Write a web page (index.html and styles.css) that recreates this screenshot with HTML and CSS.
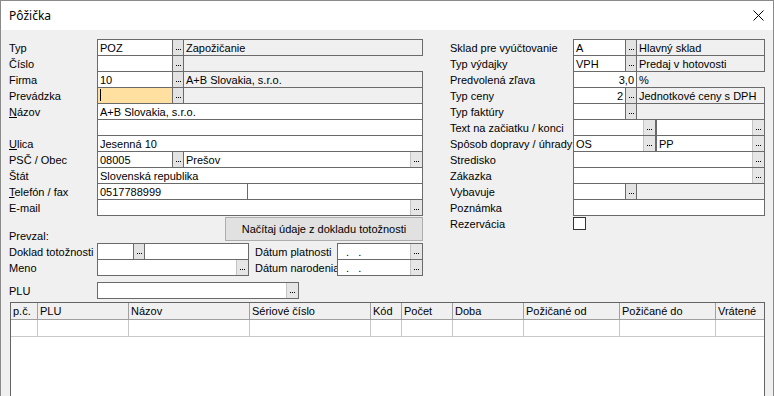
FILE: index.html
```html
<!doctype html>
<html lang="sk">
  <head>
    <meta charset="utf-8">
    <title>Pôžička</title>
    <link rel="stylesheet" href="styles.css">
  </head>
  <body>
    <div class="window">
      <div class="titlebar">
        <span class="title">Pôžička</span>
        <svg class="close" width="11" height="11" viewBox="0 0 11 11">
          <path d="M0.5 0.5 L10.5 10.5 M10.5 0.5 L0.5 10.5" stroke="#000" stroke-width="1" fill="none"/>
        </svg>
      </div>

      <div class="client">
        <div class="form">
          <!-- left side -->
          <div class="col col-left">
            <div class="row"><span class="lbl">Typ</span><span class="f w76">POZ</span><span class="f b"></span><span class="f ro w240">Zapožičanie</span></div>
            <div class="row"><span class="lbl">Číslo</span><span class="f w76"></span><span class="f b"></span></div>
            <div class="row"><span class="lbl">Firma</span><span class="f w76">10</span><span class="f b"></span><span class="f ro w240">A+B Slovakia, s.r.o.</span></div>
            <div class="row"><span class="lbl">Prevádzka</span><span class="f w76 focus"><span class="caret"></span></span><span class="f b"></span><span class="f ro w240"></span></div>
            <div class="row"><span class="lbl"><u>N</u>ázov</span><span class="f w326">A+B Slovakia, s.r.o.</span></div>
            <div class="row"><span class="lbl"></span><span class="f w326"></span></div>
            <div class="row"><span class="lbl"><u>U</u>lica</span><span class="f w326">Jesenná 10</span></div>
            <div class="row"><span class="lbl">PSČ / Obec</span><span class="f w76">08005</span><span class="f b"></span><span class="f w240 wb"><span class="t">Prešov</span><span class="ib"></span></span></div>
            <div class="row"><span class="lbl">Štát</span><span class="f w326">Slovenská republika</span></div>
            <div class="row"><span class="lbl"><u>T</u>elefón / fax</span><span class="f w151">0517788999</span><span class="f w176"></span></div>
            <div class="row"><span class="lbl">E-mail</span><span class="f w326 wb"><span class="t"></span><span class="ib"></span></span></div>
            <div class="row row-prevzal">
              <span class="lbl lbl-bottom">Prevzal:</span>
              <button class="load">Načítaj údaje z dokladu totožnosti</button>
            </div>
            <div class="row">
              <span class="lbl">Doklad totožnosti</span><span class="f w37"></span><span class="f b"></span><span class="f w105"></span>
              <span class="lbl lbl-date">Dátum platnosti</span><span class="f w86 wb"><span class="t mask">&nbsp;&nbsp;.&nbsp;&nbsp;&nbsp;.</span><span class="ib"></span></span>
            </div>
            <div class="row">
              <span class="lbl">Meno</span><span class="f w152 wb"><span class="t"></span><span class="ib"></span></span>
              <span class="lbl lbl-date">Dátum narodenia</span><span class="f w86 wb"><span class="t mask">&nbsp;&nbsp;.&nbsp;&nbsp;&nbsp;.</span><span class="ib"></span></span>
            </div>
          </div>

          <!-- right side -->
          <div class="col col-right">
            <div class="row"><span class="lbl">Sklad pre vyúčtovanie</span><span class="f w53">A</span><span class="f b"></span><span class="f ro w129">Hlavný sklad</span></div>
            <div class="row"><span class="lbl">Typ výdajky</span><span class="f w53">VPH</span><span class="f b"></span><span class="f ro w129">Predaj v hotovosti</span></div>
            <div class="row"><span class="lbl">Predvolená zľava</span><span class="f w64 num">3,0</span><span class="unit">%</span></div>
            <div class="row"><span class="lbl">Typ ceny</span><span class="f w53 num">2</span><span class="f b"></span><span class="f ro w129">Jednotkové ceny s DPH</span></div>
            <div class="row"><span class="lbl">Typ faktúry</span><span class="f w53"></span><span class="f b"></span><span class="f ro w129"></span></div>
            <div class="row"><span class="lbl">Text na začiatku / konci</span><span class="f w83 wb"><span class="t"></span><span class="ib"></span></span><span class="f w109 wb apart"><span class="t"></span><span class="ib"></span></span></div>
            <div class="row"><span class="lbl">Spôsob dopravy / úhrady</span><span class="f w83 wb"><span class="t">OS</span><span class="ib"></span></span><span class="f w109 wb apart"><span class="t">PP</span><span class="ib"></span></span></div>
            <div class="row"><span class="lbl">Stredisko</span><span class="f w192 wb"><span class="t"></span><span class="ib"></span></span></div>
            <div class="row"><span class="lbl">Zákazka</span><span class="f w192 wb"><span class="t"></span><span class="ib"></span></span></div>
            <div class="row"><span class="lbl">Vybavuje</span><span class="f w53"></span><span class="f b"></span><span class="f ro w129"></span></div>
            <div class="row"><span class="lbl">Poznámka</span><span class="f w192"></span></div>
            <div class="row"><span class="lbl">Rezervácia</span><span class="check"></span></div>
          </div>
        </div>

        <div class="row row-plu"><span class="lbl">PLU</span><span class="f w202 wb"><span class="t"></span><span class="ib"></span></span></div>

        <div class="grid">
          <div class="gh">p.č.</div>
          <div class="gh">PLU</div>
          <div class="gh">Názov</div>
          <div class="gh">Sériové číslo</div>
          <div class="gh">Kód</div>
          <div class="gh">Počet</div>
          <div class="gh">Doba</div>
          <div class="gh">Požičané od</div>
          <div class="gh">Požičané do</div>
          <div class="gh">Vrátené</div>
          <div class="gc"></div><div class="gc"></div><div class="gc"></div><div class="gc"></div><div class="gc"></div>
          <div class="gc"></div><div class="gc"></div><div class="gc"></div><div class="gc"></div><div class="gc"></div>
        </div>
      </div>
    </div>
  </body>
</html>
```

FILE: styles.css
```css
* {
  box-sizing: border-box;
}

html, body {
  margin: 0;
  padding: 0;
}

body {
  width: 774px;
  height: 396px;
  overflow: hidden;
  font-family: "Liberation Sans", Arial, sans-serif;
  font-size: 11px;
  color: #000;
  background: #fff;
}

.window {
  width: 774px;
  height: 396px;
  border: 1px solid #8a8a8a;
  border-bottom: none;
  display: flex;
  flex-direction: column;
}

.titlebar {
  height: 29px;
  flex: none;
  background: #fff;
  display: flex;
  align-items: center;
  justify-content: space-between;
  padding: 0 9px 0 8px;
}

.title {
  font-family: "Noto Sans", "Open Sans", sans-serif;
  font-size: 12px;
}

.client {
  flex: 1;
  background: #f0f0f0;
  padding: 9px 8px 0 8px;
  overflow: hidden;
}

.form {
  display: flex;
  gap: 27px;
}

.col-left {
  width: 414px;
}

.col-right {
  width: 315px;
}

.row {
  display: flex;
  align-items: flex-start;
  height: 16px;
}

.lbl {
  flex: none;
  width: 88px;
  line-height: 16px;
  padding-top: 1px;
  white-space: nowrap;
}

.col-right .lbl {
  width: 123px;
}

/* edit boxes */
.f {
  flex: none;
  display: flex;
  height: 17px;
  border: 1px solid #6a6a6a;
  background: #fff;
  padding: 1px 2px 0;
  line-height: 15px;
  white-space: nowrap;
  overflow: hidden;
}

.f + .f {
  margin-left: -1px;
}

.f + .f.apart {
  margin-left: 0;
}

.ro {
  background: #f0f0f0;
}

.focus {
  background: #ffe0a0;
}

.caret {
  width: 1px;
  height: 12px;
  background: #000;
}

.num {
  justify-content: flex-end;
  padding-right: 2px;
}

.unit {
  margin-left: 2px;
  line-height: 16px;
  padding-top: 1px;
}

/* "..." buttons */
.b {
  width: 12px;
  padding: 0;
  background: #e3e3e3;
  justify-content: center;
  align-items: center;
}

.b::after,
.ib::after {
  content: "";
  width: 5px;
  height: 1px;
  margin-top: 3px;
  background: repeating-linear-gradient(to right, #000 0 1px, transparent 1px 2px);
}

.wb {
  padding-right: 0;
}

.wb .t {
  flex: 1;
  overflow: hidden;
}

.ib {
  flex: none;
  display: flex;
  justify-content: center;
  align-items: center;
  width: 12px;
  height: 16px;
  margin-top: -1px;
  border-left: 1px solid #c4c4c4;
  background: #e6e6e6;
}

.w37 { width: 37px; }
.w53 { width: 53px; }
.w64 { width: 64px; }
.w76 { width: 76px; }
.w83 { width: 83px; }
.w86 { width: 86px; }
.w105 { width: 105px; }
.w109 { width: 109px; }
.w129 { width: 129px; }
.w151 { width: 151px; }
.w152 { width: 152px; }
.w176 { width: 176px; }
.w192 { width: 192px; }
.w202 { width: 202px; }
.w240 { width: 240px; }
.w326 { width: 326px; }

.lbl-date {
  width: 82px;
  margin-left: 6px;
}

.row-prevzal {
  height: 28px;
}

.lbl-bottom {
  align-self: flex-end;
  padding-top: 0;
  margin-bottom: -1px;
}

.load {
  margin: 2px 0 0 128px;
  width: 198px;
  height: 24px;
  padding: 0;
  border: 1px solid #adadad;
  background: #e1e1e1;
  font-family: "Liberation Sans", Arial, sans-serif;
  font-size: 11px;
  color: #000;
}

.check {
  width: 13px;
  height: 13px;
  margin-top: 2px;
  border: 1px solid #333;
  background: #fff;
}

.row-plu {
  margin-top: 7px;
}

/* item grid */
.grid {
  margin: 4px 0 0 1px;
  width: 755px;
  height: 100px;
  border: 1px solid #646464;
  border-bottom: none;
  background: #fff;
  display: grid;
  grid-template-columns: 27px 91px 121px 121px 31px 51px 71px 96px 96px 48px;
  grid-template-rows: 17px 17px;
  align-content: start;
}

.gh {
  background: #f0f0f0;
  border-right: 1px solid #a0a0a0;
  border-bottom: 1px solid #a0a0a0;
  padding: 1px 0 0 2px;
  line-height: 15px;
  white-space: nowrap;
  overflow: hidden;
}

.gc {
  border-right: 1px solid #c8c8c8;
  border-bottom: 1px solid #c8c8c8;
}

.gh:nth-child(10),
.gc:last-child {
  border-right: none;
}
```
